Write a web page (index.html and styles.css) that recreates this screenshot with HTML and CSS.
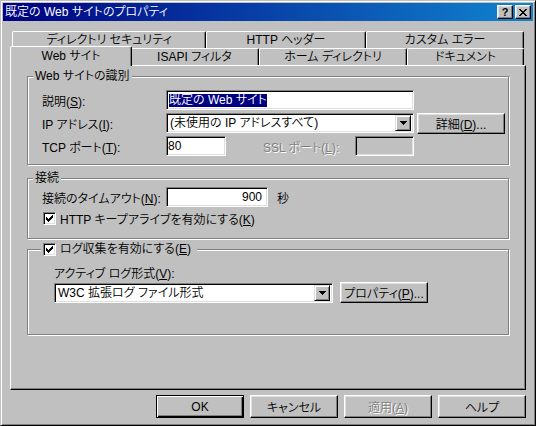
FILE: index.html
```html
<!DOCTYPE html>
<html lang="ja">
  <head>
    <meta charset="UTF-8" />
    <title>既定の Web サイトのプロパティ</title>
    <link rel="stylesheet" href="styles.css">
  </head>
  <body>
    <div class="window">
      <!-- Title bar -->
      <div class="titlebar">
        <span class="title">既定の Web サイトのプロパティ</span>
        <div class="caption-buttons">
          <button class="caption-btn help">?</button>
          <button class="caption-btn">
            <svg width="8" height="7" viewBox="0 0 8 7" shape-rendering="crispEdges">
              <path d="M0 0h2v1h-2zM6 0h2v1h-2zM1 1h2v1h-2zM5 1h2v1h-2zM2 2h4v1h-4zM3 3h2v1h-2zM2 4h4v1h-4zM1 5h2v1h-2zM5 5h2v1h-2zM0 6h2v1h-2zM6 6h2v1h-2z" fill="#000" />
            </svg>
          </button>
        </div>
      </div>

      <div class="client">
        <!-- Tabs -->
        <div class="tabs">
          <div class="tab-row back">
            <div class="tab">ディレクトリ セキュリティ</div>
            <div class="tab">HTTP ヘッダー</div>
            <div class="tab">カスタム エラー</div>
          </div>
          <div class="tab-row front">
            <div class="tab selected">Web サイト</div>
            <div class="tab">ISAPI フィルタ</div>
            <div class="tab">ホーム ディレクトリ</div>
            <div class="tab">ドキュメント</div>
          </div>
        </div>

        <div class="panel">
          <!-- Web サイトの識別 -->
          <div class="group ident">
            <div class="group-title">Web サイトの識別</div>
            <div class="rows">
              <div class="row">
                <span class="label">説明(<u>S</u>):</span>
                <div class="textbox wide"><span class="sel">既定の Web サイト</span></div>
              </div>
              <div class="row">
                <span class="label">IP アドレス(<u>I</u>):</span>
                <div class="combo wide">
                  <span class="combo-text">(未使用の IP アドレスすべて)</span>
                  <span class="drop">
                    <svg width="7" height="4" viewBox="0 0 7 4" shape-rendering="crispEdges"><path d="M0 0h7v1h-7zM1 1h5v1h-5zM2 2h3v1h-3zM3 3h1v1h-1z" fill="#000" /></svg>
                  </span>
                </div>
                <button class="btn side-btn">詳細(<u>D</u>)...</button>
              </div>
              <div class="row">
                <span class="label">TCP ポート(<u>T</u>):</span>
                <div class="port-line">
                  <div class="textbox port">80</div>
                  <span class="disabled ssl-label">SSL ポート(<u>L</u>):</span>
                  <div class="textbox port off"></div>
                </div>
              </div>
            </div>
          </div>

          <!-- 接続 -->
          <div class="group conn">
            <div class="group-title">接続</div>
            <div class="row timeout">
              <span class="label">接続のタイムアウト(<u>N</u>):</span>
              <div class="textbox num">900</div>
              <span class="unit">秒</span>
            </div>
            <div class="check-row">
              <span class="checkbox">
                <svg width="7" height="7" viewBox="0 0 7 7" shape-rendering="crispEdges"><path d="M6 0h1v3h-1zM5 1h1v3h-1zM4 2h1v3h-1zM3 3h1v3h-1zM2 4h1v3h-1zM1 3h1v3h-1zM0 2h1v3h-1z" fill="#000" /></svg>
              </span>
              <span>HTTP キープアライブを有効にする(<u>K</u>)</span>
            </div>
          </div>

          <!-- ログ -->
          <div class="group logging">
            <div class="group-title check-title">
              <span class="checkbox">
                <svg width="7" height="7" viewBox="0 0 7 7" shape-rendering="crispEdges"><path d="M6 0h1v3h-1zM5 1h1v3h-1zM4 2h1v3h-1zM3 3h1v3h-1zM2 4h1v3h-1zM1 3h1v3h-1zM0 2h1v3h-1z" fill="#000" /></svg>
              </span>
              <span>ログ収集を有効にする(<u>E</u>)</span>
            </div>
            <div class="log-label">アクティブ ログ形式(<u>V</u>):</div>
            <div class="row log-row">
              <div class="combo log-combo">
                <span class="combo-text">W3C 拡張ログ ファイル形式</span>
                <span class="drop">
                  <svg width="7" height="4" viewBox="0 0 7 4" shape-rendering="crispEdges"><path d="M0 0h7v1h-7zM1 1h5v1h-5zM2 2h3v1h-3zM3 3h1v1h-1z" fill="#000" /></svg>
                </span>
              </div>
              <button class="btn side-btn">プロパティ(<u>P</u>)...</button>
            </div>
          </div>
        </div>

        <!-- Dialog buttons -->
        <div class="dialog-buttons">
          <button class="btn default">OK</button>
          <button class="btn">キャンセル</button>
          <button class="btn disabled">適用(<u>A</u>)</button>
          <button class="btn">ヘルプ</button>
        </div>
      </div>
    </div>
  </body>
</html>
```

FILE: styles.css
```css
* {
  box-sizing: border-box;
}
body {
  margin: 0;
  background: #c0c0c0;
  font-family: "Liberation Sans", "Noto Sans CJK JP", sans-serif;
  font-size: 12px;
  font-weight: 350;
  font-feature-settings: "palt";
  color: #000;
}
u {
  text-underline-offset: 1px;
}
button {
  font: inherit;
  font-feature-settings: "palt";
  color: #000;
  padding: 0;
}

/* window frame */
.window {
  width: 536px;
  height: 426px;
  display: flex;
  flex-direction: column;
  padding: 2px;
  background: #c0c0c0;
  border: 1px solid;
  border-color: #c0c0c0 #000 #000 #c0c0c0;
  box-shadow: inset 1px 1px #fff, inset -1px -1px #808080;
}
.titlebar {
  height: 18px;
  display: flex;
  align-items: center;
  padding: 0 2px 0 2px;
  background: linear-gradient(to right, #000080, #1084d0);
}
.title {
  color: #fff;
  line-height: 18px;
}
.caption-buttons {
  margin-left: auto;
  display: flex;
  gap: 2px;
}
.caption-btn {
  width: 16px;
  height: 14px;
  display: flex;
  align-items: center;
  justify-content: center;
  background: #c0c0c0;
  border: 1px solid;
  border-color: #fff #000 #000 #fff;
  box-shadow: inset -1px -1px #808080, inset 1px 1px #dfdfdf;
}
.caption-btn.help {
  font-weight: bold;
  font-size: 11px;
  line-height: 12px;
}

.client {
  flex: 1;
  display: flex;
  flex-direction: column;
  padding: 10px 7px 0;
}

/* tabs */
.tabs {
  margin: 0 2px;
}
.tab-row {
  display: flex;
  height: 17px;
}
.tab {
  text-align: center;
  line-height: 16px;
  white-space: nowrap;
  background: #c0c0c0;
  border: 1px solid;
  border-bottom: none;
  border-color: #fff #000 transparent #fff;
  border-radius: 2px 2px 0 0;
  box-shadow: inset -1px 0 #808080;
}
.back .tab:nth-child(1) {
  width: 194px;
}
.back .tab:nth-child(2) {
  width: 160px;
}
.back .tab:nth-child(3) {
  width: 158px;
}
.front .tab:nth-child(1) {
  width: 122px;
}
.front .tab:nth-child(2) {
  width: 129px;
}
.front .tab:nth-child(3) {
  width: 148px;
}
.front .tab:nth-child(4) {
  width: 117px;
}
.tab.selected {
  position: relative;
  z-index: 1;
  height: 20px;
  margin: -2px -2px 0;
  line-height: 18px;
}

.panel {
  height: 325px;
  display: flex;
  flex-direction: column;
  padding: 10px 16px 0;
  border: 1px solid;
  border-color: #fff #000 #000 #fff;
  box-shadow: inset -1px -1px #808080;
}

/* group boxes */
.group {
  display: flex;
  flex-direction: column;
  padding-left: 14px;
  border: 1px solid #808080;
  box-shadow: inset 1px 1px #fff, 1px 1px #fff;
}
.group-title {
  align-self: flex-start;
  height: 14px;
  line-height: 14px;
  margin: -8px 0 0 -9px;
  padding: 0 2px;
  background: #c0c0c0;
}
.ident {
  padding-bottom: 8px;
}
.conn {
  margin-top: 13px;
  padding-bottom: 13px;
}
.logging {
  margin-top: 10px;
  padding-bottom: 31px;
}

.rows {
  margin-top: 7px;
  display: flex;
  flex-direction: column;
  gap: 3px;
}
.row {
  display: flex;
  align-items: center;
  height: 20px;
}
.label {
  width: 124px;
  white-space: nowrap;
}

/* sunken fields */
.textbox,
.combo {
  height: 20px;
  background: #fff;
  border: 1px solid;
  border-color: #808080 #fff #fff #808080;
  box-shadow: inset 1px 1px #000, inset -1px -1px #dfdfdf;
  line-height: 16px;
  white-space: nowrap;
}
.textbox {
  padding: 1px 2px 0 1px;
}
.wide {
  width: 248px;
}
.sel {
  display: inline-block;
  line-height: 13px;
  margin-left: 1px;
  background: #000080;
  color: #fff;
}
.combo {
  display: flex;
  align-items: center;
  padding: 2px;
}
.combo-text {
  padding-left: 1px;
}
.drop {
  margin-left: auto;
  width: 16px;
  height: 16px;
  display: flex;
  align-items: center;
  justify-content: center;
  background: #c0c0c0;
  border: 1px solid;
  border-color: #dfdfdf #000 #000 #dfdfdf;
  box-shadow: inset 1px 1px #fff, inset -1px -1px #808080;
}

.port-line {
  width: 248px;
  display: flex;
  align-items: center;
}
.port {
  width: 60px;
}
.port.off {
  width: 59px;
  margin-left: auto;
  background: #c0c0c0;
}
.ssl-label {
  margin-left: 37px;
}
.disabled {
  color: #808080;
  text-shadow: 1px 1px 0 #fff;
}

.timeout {
  margin-top: 2px;
}
.num {
  width: 102px;
  text-align: right;
  padding-right: 5px;
}
.unit {
  margin-left: 9px;
}

.check-row {
  margin-top: 4px;
  height: 14px;
  display: flex;
  align-items: center;
  gap: 4px;
  padding-left: 1px;
}
.checkbox {
  width: 13px;
  height: 13px;
  display: flex;
  align-items: center;
  justify-content: center;
  background: #fff;
  border: 1px solid;
  border-color: #808080 #fff #fff #808080;
  box-shadow: inset 1px 1px #000, inset -1px -1px #dfdfdf;
}
.check-title {
  display: flex;
  align-items: center;
  gap: 4px;
  margin-left: -1px;
  padding: 0 6px 0 2px;
}

.log-label {
  margin-top: 11px;
  padding-left: 12px;
  line-height: 14px;
}
.log-row {
  margin-top: 1px;
  padding-left: 12px;
  height: 21px;
}
.log-combo {
  width: 279px;
}

/* raised buttons */
.btn {
  width: 88px;
  height: 23px;
  background: #c0c0c0;
  border: 1px solid;
  border-color: #fff #000 #000 #fff;
  box-shadow: inset -1px -1px #808080, inset 1px 1px #dfdfdf;
  white-space: nowrap;
}
.btn.default {
  border-color: #000;
  box-shadow: inset 1px 1px #fff, inset -1px -1px #000, inset -2px -2px #808080;
}
.side-btn {
  height: 21px;
  align-self: flex-start;
}
.row .side-btn {
  margin-left: 3px;
}
.log-row .side-btn {
  margin-left: 7px;
}

.dialog-buttons {
  margin-top: 5px;
  display: flex;
  justify-content: flex-end;
  gap: 6px;
}
```
